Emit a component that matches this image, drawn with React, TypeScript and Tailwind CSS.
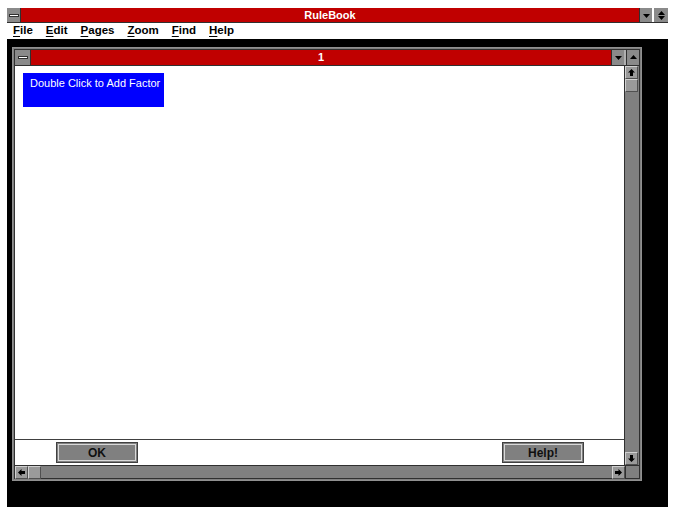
import React from "react"

const font = { fontFamily: '"Liberation Sans", Arial, sans-serif' }

function Arrow({ dir, size = 7 }: { dir: "up" | "down" | "left" | "right"; size?: number }) {
  const pts: Record<string, string> = {
    down: "0,2 7,2 3.5,6",
    up: "0,5 7,5 3.5,1",
    left: "5,0 5,7 1,3.5",
    right: "2,0 2,7 6,3.5",
  }
  return (
    <svg width={size} height={size} viewBox="0 0 7 7">
      <polygon points={pts[dir]} fill="#000" />
    </svg>
  )
}

function StemArrow({ dir }: { dir: "up" | "down" | "left" | "right" }) {
  const d: Record<string, string> = {
    up: "M3.5 0 L7 3.5 L5 3.5 L5 7 L2 7 L2 3.5 L0 3.5 Z",
    down: "M3.5 7 L7 3.5 L5 3.5 L5 0 L2 0 L2 3.5 L0 3.5 Z",
    left: "M0 3.5 L3.5 0 L3.5 2 L7 2 L7 5 L3.5 5 L3.5 7 Z",
    right: "M7 3.5 L3.5 0 L3.5 2 L0 2 L0 5 L3.5 5 L3.5 7 Z",
  }
  return (
    <svg width="7" height="7" viewBox="0 0 7 7">
      <path d={d[dir]} fill="#000" />
    </svg>
  )
}

function SysBox({ w }: { w: string }) {
  return (
    <div className={`${w} h-full bg-[#8a8a8a] flex items-center justify-center border-r border-[#303030]`}>
      <div className="w-[10px] h-[3px] bg-white border border-[#303030]" />
    </div>
  )
}

function TitleBtn({ children }: { children: React.ReactNode }) {
  return (
    <div className="w-[13px] h-full bg-[#8a8a8a] border-l border-[#303030] flex items-center justify-center">
      {children}
    </div>
  )
}

function ScrollBtn({ children, className = "" }: { children: React.ReactNode; className?: string }) {
  return (
    <div className={`w-[13px] h-[13px] bg-[#9a9a9a] border border-t-[#d0d0d0] border-l-[#d0d0d0] border-r-[#505050] border-b-[#505050] flex items-center justify-center ${className}`}>
      {children}
    </div>
  )
}

function PushButton({ label }: { label: string }) {
  return (
    <div className="w-[82px] h-[21px] bg-[#808080] border border-[#404040] p-px">
      <div className="w-full h-full border border-[#d8d8d8] flex items-center justify-center text-[12px] font-bold text-[#101010]">
        {label}
      </div>
    </div>
  )
}

export default function App() {
  const menus = ["File", "Edit", "Pages", "Zoom", "Find", "Help"]
  return (
    <div className="w-[679px] h-[514px] bg-white overflow-hidden pl-[7px] pt-[8px]" style={font}>
      <div className="w-[661px] flex flex-col">
        {/* Main title bar */}
        <div className="h-[15px] flex bg-[#c00000] border-b border-[#303030]">
          <SysBox w="w-[14px]" />
          <div className="flex-1 flex items-center justify-center text-white font-bold text-[11px] leading-none">
            RuleBook
          </div>
          <div className="w-[13px] h-full bg-[#8a8a8a] flex items-center justify-center border-l border-[#303030]">
            <Arrow dir="down" />
          </div>
          <div className="w-[2px] bg-white" />
          <div className="w-[14px] h-full bg-[#8a8a8a] flex flex-col items-center justify-center">
            <svg width="7" height="9" viewBox="0 0 7 9">
              <polygon points="0,4 7,4 3.5,0" fill="#000" />
              <polygon points="0,5 7,5 3.5,9" fill="#000" />
            </svg>
          </div>
        </div>

        {/* Menu bar */}
        <div className="h-[16px] flex items-center gap-[13px] pl-[6px] bg-white text-[11.5px] font-bold text-black leading-none">
          {menus.map((m) => (
            <span key={m}>
              <span className="underline underline-offset-[2px]">{m[0]}</span>
              {m.slice(1)}
            </span>
          ))}
        </div>

        {/* MDI area */}
        <div className="h-[468px] bg-black pl-[5px] pt-[8px]">
          <div className="w-[630px] h-[434px] bg-[#808080] border border-[#909090] p-px flex flex-col">
            {/* Child title */}
            <div className="h-[17px] flex bg-[#c00000] border border-[#303030]">
              <SysBox w="w-[16px]" />
              <div className="flex-1 flex items-center justify-center text-white font-bold text-[11px] leading-none">
                1
              </div>
              <TitleBtn>
                <Arrow dir="down" />
              </TitleBtn>
              <div className="w-[2px] bg-[#b0b0b0]" />
              <TitleBtn>
                <Arrow dir="up" />
              </TitleBtn>
            </div>

            <div className="flex-1 flex border-x border-[#303030]">
              {/* Client */}
              <div className="flex-1 bg-white flex flex-col border-r border-[#303030]">
                <div className="flex-1 pl-[8px] pt-[7px]">
                  <div className="w-[141px] h-[34px] bg-[#0000ff] text-white text-[11px] pl-[7px] pt-[2px]">
                    Double Click to Add Factor
                  </div>
                </div>
                <div className="h-px bg-[#404040]" />
                <div className="h-[25px] flex items-center justify-between pl-[41px] pr-[40px]">
                  <PushButton label="OK" />
                  <PushButton label="Help!" />
                </div>
              </div>
              {/* Vertical scrollbar */}
              <div className="w-[14px] bg-[#808080] flex flex-col">
                <ScrollBtn>
                  <StemArrow dir="up" />
                </ScrollBtn>
                <ScrollBtn>{null}</ScrollBtn>
                <div className="flex-1" />
                <ScrollBtn>
                  <StemArrow dir="down" />
                </ScrollBtn>
              </div>
            </div>

            {/* Horizontal scrollbar */}
            <div className="h-[14px] flex border border-[#303030]">
              <div className="flex-1 bg-[#808080] flex border-r border-[#303030]">
                <ScrollBtn>
                  <StemArrow dir="left" />
                </ScrollBtn>
                <ScrollBtn>{null}</ScrollBtn>
                <div className="flex-1" />
                <ScrollBtn>
                  <StemArrow dir="right" />
                </ScrollBtn>
              </div>
              <div className="w-[13px] bg-[#808080]" />
            </div>
          </div>
        </div>
      </div>
    </div>
  )
}
